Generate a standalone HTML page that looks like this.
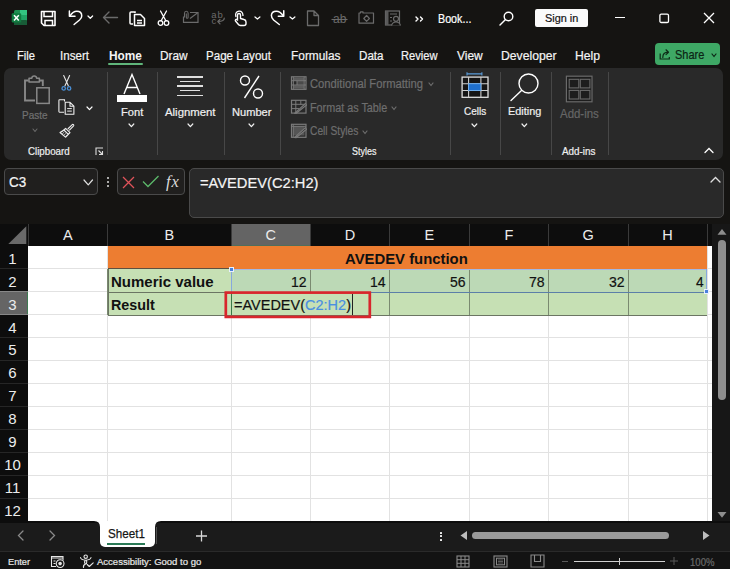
<!DOCTYPE html>
<html><head><meta charset="utf-8">
<style>
*{margin:0;padding:0;box-sizing:border-box}
html,body{width:730px;height:569px;overflow:hidden;background:#151412;font-family:"Liberation Sans",sans-serif}
.a{position:absolute}
.t{position:absolute;white-space:nowrap;font-family:"Liberation Sans",sans-serif}
svg{overflow:visible}
</style></head><body>
<div class="a" style="left:0px;top:0px;width:730px;height:569px;background:#151412;"></div>
<svg class="a" style="left:10px;top:9px;" width="18" height="17" viewBox="0 0 18 17">
<rect x="4" y="1" width="13" height="15" rx="1.5" fill="#1e8f52"/>
<rect x="10" y="1" width="7" height="5" fill="#33c481"/>
<rect x="10" y="6" width="7" height="5" fill="#21a366"/>
<rect x="4" y="11" width="13" height="5" rx="1" fill="#185c37"/>
<rect x="1.7" y="4.2" width="9.5" height="9.3" rx="1.2" fill="#107c41"/>
<path d="M4 6.2 L8.8 11.6 M8.8 6.2 L4 11.6" stroke="#fff" stroke-width="1.5"/>
</svg>
<svg class="a" style="left:40px;top:10px;" width="17" height="17" viewBox="0 0 17 17">
<path d="M1.5 1.5 H15 V15.5 H4 L1.5 13 Z" fill="none" stroke="#fff" stroke-width="1.6" stroke-linejoin="round"/>
<path d="M4 1.5 V6.5 H12.5 V1.5" fill="none" stroke="#fff" stroke-width="1.5"/>
<path d="M5 15.5 V10.5 H12.5 V15.5" fill="none" stroke="#fff" stroke-width="1.5"/>
</svg>
<svg class="a" style="left:64px;top:7px;" width="22" height="20" viewBox="0 0 22 20">
<path d="M5.4 3.9 V9.3 H11" fill="none" stroke="#fff" stroke-width="1.5" stroke-linecap="round" stroke-linejoin="round"/>
<path d="M6 8.8 Q9 4.2 12.8 4.2 Q17.75 4.2 17.75 8.9 Q17.75 11 15.5 13 L10.1 17.5" fill="none" stroke="#fff" stroke-width="1.5" stroke-linecap="round"/>
</svg>
<svg class="a" style="left:87.2px;top:15.4px;" width="6.6" height="4.3" viewBox="0 0 6.6 4.3"><path d="M1 1 L3.3 3.3 L5.6 1" fill="none" stroke="#fff" stroke-width="1.25" stroke-linecap="round" stroke-linejoin="round"/></svg>
<svg class="a" style="left:102px;top:11px;" width="17" height="13" viewBox="0 0 17 13"><path d="M1.5 6.5 H15.5 M7 1 L1.5 6.5 L7 12" fill="none" stroke="#6b6b6b" stroke-width="1.4" stroke-linecap="round" stroke-linejoin="round"/></svg>
<svg class="a" style="left:129px;top:10px;" width="18" height="17" viewBox="0 0 18 17">
<path d="M6 3 V2 H2 Q1 2 1 3 V13 Q1 14 2 14 H4" fill="none" stroke="#fff" stroke-width="1.5"/>
<path d="M5.5 4.5 H11.5 L15.5 8.5 V15.5 H5.5 Z" fill="none" stroke="#fff" stroke-width="1.5" stroke-linejoin="round"/>
<path d="M8 10.5 H13 M8 13 H13" stroke="#fff" stroke-width="1.3"/>
</svg>
<svg class="a" style="left:157px;top:10px;" width="13" height="17" viewBox="0 0 13 17">
<path d="M3.5 1 L9 11 M9.5 1 L4 11" stroke="#fff" stroke-width="1.3" stroke-linecap="round"/>
<circle cx="3.5" cy="13" r="2.3" fill="none" stroke="#fff" stroke-width="1.3"/>
<circle cx="9.5" cy="13" r="2.3" fill="none" stroke="#fff" stroke-width="1.3"/>
</svg>
<svg class="a" style="left:182px;top:10px;" width="18" height="14" viewBox="0 0 18 14">
<path d="M1.5 6.5 V12.3 H16 V2.5 H8" fill="none" stroke="#6b6b6b" stroke-width="1.2"/>
<path d="M16 2.5 L8 8.5" stroke="#6b6b6b" stroke-width="1.2"/>
<path d="M2.5 7.5 V3.3 Q2.5 1.3 4.3 1.3 Q6.1 1.3 6.1 3.3 V7.2 Q6.1 8.3 5.2 8.3 Q4.3 8.3 4.3 7.2 V3.5" fill="none" stroke="#6b6b6b" stroke-width="1.1"/>
</svg>
<div class="t" style="left:211.2px;top:10.00px;font-size:9.5px;line-height:9.5px;color:#6b6b6b;font-weight:normal;">a<span style="margin-left:1px">b</span></div>
<div class="t" style="left:211.6px;top:16.00px;font-size:9.5px;line-height:9.5px;color:#6b6b6b;font-weight:normal;">c</div>
<svg class="a" style="left:216px;top:17px;" width="10" height="8" viewBox="0 0 10 8"><path d="M8.3 1 Q8.3 4.5 2 4.5 M4 2.3 L1.8 4.5 L4 6.8" fill="none" stroke="#6b6b6b" stroke-width="1.2" stroke-linecap="round" stroke-linejoin="round"/></svg>
<svg class="a" style="left:233px;top:10px;" width="15" height="17" viewBox="0 0 15 17">
<path d="M4.5 9 V5 Q4.5 3.5 6 3.5 Q7.5 3.5 7.5 5 V8.5 L11 9.5 Q13 10 13 12 V13.5 Q13 15.5 11 15.5 H7.5 Q6 15.5 5 14 L2.5 11 Q2 10 3 9.5 Q4 9 5 10.5" fill="none" stroke="#fff" stroke-width="1.4" stroke-linejoin="round"/>
<path d="M3 7 Q1.5 2 6 1.2 Q10 1 10 6" fill="none" stroke="#fff" stroke-width="1.3"/>
</svg>
<svg class="a" style="left:253.6px;top:15.6px;" width="6.9" height="4.0" viewBox="0 0 6.9 4.0"><path d="M1 1 L3.45 3.0 L5.9 1" fill="none" stroke="#fff" stroke-width="1.25" stroke-linecap="round" stroke-linejoin="round"/></svg>
<svg class="a" style="left:266px;top:7px;" width="22" height="20" viewBox="0 0 22 20">
<path d="M17.75 3.7 V9.3 H12.3" fill="none" stroke="#fff" stroke-width="1.5" stroke-linecap="round" stroke-linejoin="round"/>
<path d="M17.2 8.8 Q14.2 4.2 10.4 4.2 Q5.4 4.2 5.4 8.6 Q5.4 10.8 7.6 13 L13.3 17.5" fill="none" stroke="#fff" stroke-width="1.5" stroke-linecap="round"/>
</svg>
<svg class="a" style="left:289.4px;top:15.6px;" width="6.9" height="4.0" viewBox="0 0 6.9 4.0"><path d="M1 1 L3.45 3.0 L5.9 1" fill="none" stroke="#fff" stroke-width="1.25" stroke-linecap="round" stroke-linejoin="round"/></svg>
<svg class="a" style="left:306px;top:10px;" width="14" height="17" viewBox="0 0 14 17"><path d="M1.5 1 H8 L12.5 5.5 V15.5 H1.5 Z M8 1 V5.5 H12.5" fill="none" stroke="#6b6b6b" stroke-width="1.3" stroke-linejoin="round"/></svg>
<div class="t" style="left:333px;top:13.00px;font-size:12px;line-height:12px;color:#6b6b6b;font-weight:normal;">ab</div>
<svg class="a" style="left:331px;top:18px;" width="17" height="3" viewBox="0 0 17 3"><path d="M0.5 1.5 H16.5" stroke="#6b6b6b" stroke-width="1.1"/></svg>
<svg class="a" style="left:358px;top:10px;" width="17" height="15" viewBox="0 0 17 15"><path d="M1 3 H2.5 V1.8 H5 V3 H15.5 V13.2 H1 Z" fill="none" stroke="#6b6b6b" stroke-width="1.2" stroke-linejoin="round"/>
<path d="M8.6 5.4 L11.4 8.5 L8.6 11.4 L5.8 8.5 Z" fill="none" stroke="#6b6b6b" stroke-width="1.2" stroke-linejoin="round"/></svg>
<svg class="a" style="left:384px;top:10px;" width="18" height="17" viewBox="0 0 18 17"><rect x="1.5" y="1" width="14" height="14" fill="none" stroke="#6b6b6b" stroke-width="1.2"/>
<rect x="1.5" y="1" width="3" height="14" fill="#5a5a5a"/>
<path d="M6 4 H13 M6 7.5 H8 M6 11 H8" stroke="#6b6b6b" stroke-width="1.2"/>
<circle cx="12" cy="8.8" r="2.5" fill="#151412" stroke="#6b6b6b" stroke-width="1.2"/>
<path d="M7.5 15.5 Q8.5 12 12 12 Q15.5 12 16.5 15.5" fill="#151412" stroke="#6b6b6b" stroke-width="1.2"/></svg>
<svg class="a" style="left:415px;top:16px;" width="10" height="6" viewBox="0 0 10 6"><path d="M1 1 L3 3 L1 5 M5.5 1 L7.5 3 L5.5 5" fill="none" stroke="#fff" stroke-width="1.4" stroke-linecap="round" stroke-linejoin="round"/></svg>
<div class="t" style="left:438.40px;top:13.00px;font-size:12.3px;line-height:12.3px;color:#ffffff;font-weight:normal;transform:scaleX(0.8717);transform-origin:0 0;-webkit-text-stroke:0.2px currentColor;">Book...</div>
<svg class="a" style="left:498px;top:11px;" width="17" height="16" viewBox="0 0 17 16"><circle cx="10.5" cy="5.5" r="4.3" fill="none" stroke="#fff" stroke-width="1.4"/>
<path d="M7.5 8.5 L2 14" stroke="#fff" stroke-width="1.5" stroke-linecap="round"/></svg>
<div class="a" style="left:535px;top:9px;width:53px;height:18px;background:#fafafa;border-radius:2px"></div>
<div class="t" style="left:544.70px;top:13.00px;font-size:11.8px;line-height:11.8px;color:#111;font-weight:normal;transform:scaleX(0.9222);transform-origin:0 0;-webkit-text-stroke:0.2px currentColor;">Sign in</div>
<div class="a" style="left:615px;top:17px;width:10px;height:1.2px;background:#fff;"></div>
<svg class="a" style="left:658px;top:12px;" width="12" height="12" viewBox="0 0 12 12"><rect x="1.9" y="2.1" width="8.6" height="8.4" rx="1.3" fill="none" stroke="#fff" stroke-width="1.3"/></svg>
<svg class="a" style="left:703px;top:12px;" width="12" height="12" viewBox="0 0 12 12"><path d="M1 1 L11 11 M11 1 L1 11" stroke="#fff" stroke-width="1.3"/></svg>
<div class="t" style="left:17.00px;top:50.00px;font-size:12.3px;line-height:12.3px;color:#f4f4f4;font-weight:normal;transform:scaleX(0.9090);transform-origin:0 0;-webkit-text-stroke:0.2px currentColor;">File</div>
<div class="t" style="left:60.00px;top:50.00px;font-size:12.3px;line-height:12.3px;color:#f4f4f4;font-weight:normal;transform:scaleX(0.9431);transform-origin:0 0;-webkit-text-stroke:0.2px currentColor;">Insert</div>
<div class="t" style="left:109.00px;top:50.00px;font-size:12.3px;line-height:12.3px;color:#f4f4f4;font-weight:bold;transform:scaleX(0.9651);transform-origin:0 0;">Home</div>
<div class="t" style="left:160.00px;top:50.00px;font-size:12.3px;line-height:12.3px;color:#f4f4f4;font-weight:normal;transform:scaleX(0.9645);transform-origin:0 0;-webkit-text-stroke:0.2px currentColor;">Draw</div>
<div class="t" style="left:206.20px;top:50.00px;font-size:12.3px;line-height:12.3px;color:#f4f4f4;font-weight:normal;transform:scaleX(0.9411);transform-origin:0 0;-webkit-text-stroke:0.2px currentColor;">Page Layout</div>
<div class="t" style="left:290.80px;top:50.00px;font-size:12.3px;line-height:12.3px;color:#f4f4f4;font-weight:normal;transform:scaleX(0.9670);transform-origin:0 0;-webkit-text-stroke:0.2px currentColor;">Formulas</div>
<div class="t" style="left:358.60px;top:50.00px;font-size:12.3px;line-height:12.3px;color:#f4f4f4;font-weight:normal;transform:scaleX(0.9456);transform-origin:0 0;-webkit-text-stroke:0.2px currentColor;">Data</div>
<div class="t" style="left:401.40px;top:50.00px;font-size:12.3px;line-height:12.3px;color:#f4f4f4;font-weight:normal;transform:scaleX(0.9072);transform-origin:0 0;-webkit-text-stroke:0.2px currentColor;">Review</div>
<div class="t" style="left:456.70px;top:50.00px;font-size:12.3px;line-height:12.3px;color:#f4f4f4;font-weight:normal;transform:scaleX(0.9756);transform-origin:0 0;-webkit-text-stroke:0.2px currentColor;">View</div>
<div class="t" style="left:500.80px;top:50.00px;font-size:12.3px;line-height:12.3px;color:#f4f4f4;font-weight:normal;transform:scaleX(0.9913);transform-origin:0 0;-webkit-text-stroke:0.2px currentColor;">Developer</div>
<div class="t" style="left:575.00px;top:50.00px;font-size:12.3px;line-height:12.3px;color:#f4f4f4;font-weight:normal;transform:scaleX(0.9891);transform-origin:0 0;-webkit-text-stroke:0.2px currentColor;">Help</div>
<div class="a" style="left:108px;top:63px;width:35px;height:2px;background:#5fb57a;border-radius:1px"></div>
<div class="a" style="left:655px;top:43px;width:65px;height:22px;background:#3ea865;border-radius:4px"></div>
<svg class="a" style="left:659px;top:48px;" width="12" height="12" viewBox="0 0 12 12"><path d="M1.2 5.5 V11 H10.3 V9" fill="none" stroke="#0d2b17" stroke-width="1.2"/>
<path d="M3.8 9.5 Q3.8 4.2 9 4.2 M7 1.8 L9.5 4.2 L7 6.6" fill="none" stroke="#0d2b17" stroke-width="1.2" stroke-linejoin="round" stroke-linecap="round"/></svg>
<div class="t" style="left:675.20px;top:49.00px;font-size:12.4px;line-height:12.4px;color:#0b2414;font-weight:normal;transform:scaleX(0.8850);transform-origin:0 0;-webkit-text-stroke:0.2px currentColor;">Share</div>
<svg class="a" style="left:710.5px;top:53px;" width="6" height="4.5" viewBox="0 0 6 4.5"><path d="M1 1 L3.0 3.5 L5 1" fill="none" stroke="#0b2414" stroke-width="1.2" stroke-linecap="round" stroke-linejoin="round"/></svg>
<div class="a" style="left:4px;top:68px;width:719px;height:92px;background:#292929;border-radius:7px"></div>
<div class="a" style="left:107px;top:72px;width:1px;height:83px;background:#474747;"></div>
<div class="a" style="left:157px;top:72px;width:1px;height:83px;background:#474747;"></div>
<div class="a" style="left:224px;top:72px;width:1px;height:83px;background:#474747;"></div>
<div class="a" style="left:280px;top:72px;width:1px;height:83px;background:#474747;"></div>
<div class="a" style="left:450px;top:72px;width:1px;height:83px;background:#474747;"></div>
<div class="a" style="left:500px;top:72px;width:1px;height:83px;background:#474747;"></div>
<div class="a" style="left:550.5px;top:72px;width:1px;height:83px;background:#474747;"></div>
<div class="a" style="left:608px;top:72px;width:1px;height:83px;background:#474747;"></div>
<svg class="a" style="left:22px;top:75px;" width="30" height="31" viewBox="0 0 30 31">
<path d="M6.5 5.5 H3 V25.5 H13" fill="none" stroke="#888" stroke-width="1.9"/>
<path d="M17.8 5.5 H20.8 V11" fill="none" stroke="#888" stroke-width="1.9"/>
<path d="M7 3.2 H9.8 Q10 1.1 12.2 1.1 Q14.4 1.1 14.6 3.2 H17.4 V7 H7 Z" fill="none" stroke="#888" stroke-width="1.5" stroke-linejoin="round"/>
<rect x="14.8" y="12.8" width="12.4" height="15.6" fill="#292929" stroke="#888" stroke-width="1.5"/>
</svg>
<div class="t" style="left:21.60px;top:110.00px;font-size:10.5px;line-height:10.5px;color:#717171;font-weight:normal;transform:scaleX(0.9468);transform-origin:0 0;-webkit-text-stroke:0.2px currentColor;">Paste</div>
<svg class="a" style="left:31.5px;top:127.5px;" width="6" height="4.5" viewBox="0 0 6 4.5"><path d="M1 1 L3.0 3.5 L5 1" fill="none" stroke="#6a6a6a" stroke-width="1.1" stroke-linecap="round" stroke-linejoin="round"/></svg>
<svg class="a" style="left:60px;top:74px;" width="13" height="17" viewBox="0 0 13 17">
<path d="M3.7 1.5 L8.3 11.8 M9.6 1.5 L5 11.8" stroke="#e6e6e6" stroke-width="1.1" stroke-linecap="round"/>
<circle cx="3.7" cy="14.4" r="1.7" fill="none" stroke="#4a8fd6" stroke-width="1.3"/>
<circle cx="9.1" cy="14.4" r="1.7" fill="none" stroke="#4a8fd6" stroke-width="1.3"/>
</svg>
<svg class="a" style="left:58px;top:99px;" width="17" height="16" viewBox="0 0 17 16">
<path d="M6.5 2.5 V0.8 H1.5 Q0.9 0.8 0.9 1.4 V12.6 Q0.9 13.2 1.5 13.2 H6" fill="none" stroke="#eee" stroke-width="1.1"/>
<path d="M7.2 3.3 H12 L15.9 7.2 V15.2 H7.2 Z M12 3.3 V7.2 H15.9" fill="none" stroke="#eee" stroke-width="1.1" stroke-linejoin="round"/>
<path d="M9.2 9.6 H13.8 M9.2 12.1 H13.8" stroke="#eee" stroke-width="1"/>
</svg>
<svg class="a" style="left:85.5px;top:105.5px;" width="7" height="4.6" viewBox="0 0 7 4.6"><path d="M1 1 L3.5 3.6 L6 1" fill="none" stroke="#fff" stroke-width="1.2" stroke-linecap="round" stroke-linejoin="round"/></svg>
<svg class="a" style="left:59px;top:123px;" width="16" height="15" viewBox="0 0 16 15">
<path d="M8.8 6 L13 1.8 Q13.8 1 14.5 1.7 Q15.2 2.4 14.4 3.2 L10.2 7.4" fill="none" stroke="#eee" stroke-width="1.1"/>
<path d="M6.6 5.3 L11 9.7 L9.3 11.4 L4.9 7 Z" fill="none" stroke="#eee" stroke-width="1.1" stroke-linejoin="round"/>
<path d="M4.9 7 Q3 8.5 1 9.5 L6.5 14.2 Q8 13 9.3 11.4" fill="none" stroke="#eee" stroke-width="1.1" stroke-linejoin="round"/>
<path d="M3.2 10.8 L5.2 9.2 M4.8 12.3 L6.8 10.5 M6.5 13.4 L8.2 11.8" stroke="#ccc" stroke-width="0.9"/>
</svg>
<div class="t" style="left:28.30px;top:146.00px;font-size:10.5px;line-height:10.5px;color:#f0f0f0;font-weight:normal;transform:scaleX(0.9279);transform-origin:0 0;-webkit-text-stroke:0.2px currentColor;">Clipboard</div>
<svg class="a" style="left:95px;top:147px;" width="9" height="9" viewBox="0 0 9 9"><path d="M1 8 V1 H8" fill="none" stroke="#ddd" stroke-width="1.1"/><path d="M3.5 3.5 L7.5 7.5 M7.5 4 V7.5 H4" fill="none" stroke="#ddd" stroke-width="1.1"/></svg>
<svg class="a" style="left:116px;top:73px;" width="32" height="30" viewBox="0 0 32 30"><path d="M8 21 L16 1.5 L24 21 M11 14.5 H21" fill="none" stroke="#fff" stroke-width="1.4"/></svg>
<div class="a" style="left:117px;top:95px;width:30px;height:7px;background:#ffffff;"></div>
<div class="t" style="left:121.00px;top:107.00px;font-size:11px;line-height:11px;color:#f0f0f0;font-weight:normal;transform:scaleX(1.0091);transform-origin:0 0;-webkit-text-stroke:0.2px currentColor;">Font</div>
<svg class="a" style="left:128.3px;top:123.3px;" width="6.8" height="4.7" viewBox="0 0 6.8 4.7"><path d="M1 1 L3.4 3.7 L5.8 1" fill="none" stroke="#f0f0f0" stroke-width="1.2" stroke-linecap="round" stroke-linejoin="round"/></svg>
<div class="a" style="left:177px;top:76.3px;width:26px;height:1.5px;background:#e0e0e0;"></div>
<div class="a" style="left:180px;top:80.8px;width:20px;height:1.5px;background:#e0e0e0;"></div>
<div class="a" style="left:177px;top:85.3px;width:26px;height:1.5px;background:#e0e0e0;"></div>
<div class="a" style="left:180px;top:89.8px;width:20px;height:1.5px;background:#e0e0e0;"></div>
<div class="a" style="left:177px;top:94.8px;width:26px;height:1.5px;background:#e0e0e0;"></div>
<div class="t" style="left:164.70px;top:107.00px;font-size:11px;line-height:11px;color:#f0f0f0;font-weight:normal;transform:scaleX(1.0328);transform-origin:0 0;-webkit-text-stroke:0.2px currentColor;">Alignment</div>
<svg class="a" style="left:186.5px;top:123.3px;" width="6.8" height="4.7" viewBox="0 0 6.8 4.7"><path d="M1 1 L3.4 3.7 L5.8 1" fill="none" stroke="#f0f0f0" stroke-width="1.2" stroke-linecap="round" stroke-linejoin="round"/></svg>
<svg class="a" style="left:239px;top:74px;" width="26" height="26" viewBox="0 0 26 26"><circle cx="6" cy="6.5" r="4.5" fill="none" stroke="#fff" stroke-width="1.4"/>
<circle cx="19" cy="19.5" r="4.5" fill="none" stroke="#fff" stroke-width="1.4"/>
<path d="M20 2 L5.5 24" stroke="#fff" stroke-width="1.4"/></svg>
<div class="t" style="left:232.00px;top:107.00px;font-size:11px;line-height:11px;color:#f0f0f0;font-weight:normal;transform:scaleX(1.0075);transform-origin:0 0;-webkit-text-stroke:0.2px currentColor;">Number</div>
<svg class="a" style="left:247.9px;top:123.3px;" width="6.8" height="4.7" viewBox="0 0 6.8 4.7"><path d="M1 1 L3.4 3.7 L5.8 1" fill="none" stroke="#f0f0f0" stroke-width="1.2" stroke-linecap="round" stroke-linejoin="round"/></svg>
<svg class="a" style="left:290px;top:76px;" width="17" height="15" viewBox="0 0 17 15"><rect x="1.5" y="0.8" width="14.5" height="12.5" fill="none" stroke="#7a7a7a" stroke-width="1.2"/>
<rect x="3.5" y="1.4" width="10.5" height="3" fill="#5c5c5c"/><rect x="7" y="5" width="7" height="3.8" fill="#4a4a4a"/><rect x="3.5" y="9.3" width="10.5" height="3.4" fill="#5c5c5c"/>
<path d="M1.5 4.7 H16 M1.5 9 H16 M3.3 0.8 V13.3 M14.2 0.8 V13.3 M7 4.7 V9" stroke="#7a7a7a" stroke-width="1"/></svg>
<svg class="a" style="left:290px;top:99px;" width="17" height="16" viewBox="0 0 17 16"><rect x="1.5" y="1.3" width="14.5" height="12.8" fill="none" stroke="#7a7a7a" stroke-width="1.2"/>
<path d="M1.5 5.3 H16 M1.5 9.6 H9 M5.8 1.3 V14 M10.8 1.3 V6" stroke="#7a7a7a" stroke-width="1"/>
<path d="M4.5 14.3 L15.5 4.5 L16.5 6 L6 14.5 Z" fill="#292929" stroke="#7a7a7a" stroke-width="1.1" stroke-linejoin="round"/></svg>
<svg class="a" style="left:290px;top:123px;" width="17" height="16" viewBox="0 0 17 16"><rect x="1.5" y="1.3" width="14.5" height="13" fill="none" stroke="#7a7a7a" stroke-width="1.2"/>
<rect x="3" y="3" width="11.5" height="9.5" fill="#555"/>
<path d="M1.5 3.3 H16 M3.2 1.3 V14.3" stroke="#7a7a7a" stroke-width="1"/>
<path d="M4.5 14.5 L15.5 4.7 L16.5 6.2 L6 14.7 Z" fill="#292929" stroke="#7a7a7a" stroke-width="1.1" stroke-linejoin="round"/></svg>
<div class="t" style="left:310.00px;top:78.00px;font-size:12.3px;line-height:12.3px;color:#6e6e6e;font-weight:normal;transform:scaleX(0.9132);transform-origin:0 0;-webkit-text-stroke:0.2px currentColor;">Conditional Formatting</div>
<svg class="a" style="left:427.5px;top:82px;" width="6" height="4.5" viewBox="0 0 6 4.5"><path d="M1 1 L3.0 3.5 L5 1" fill="none" stroke="#6e6e6e" stroke-width="1.2" stroke-linecap="round" stroke-linejoin="round"/></svg>
<div class="t" style="left:310.00px;top:102.00px;font-size:12.3px;line-height:12.3px;color:#6e6e6e;font-weight:normal;transform:scaleX(0.8778);transform-origin:0 0;-webkit-text-stroke:0.2px currentColor;">Format as Table</div>
<svg class="a" style="left:390.5px;top:106px;" width="6" height="4.5" viewBox="0 0 6 4.5"><path d="M1 1 L3.0 3.5 L5 1" fill="none" stroke="#6e6e6e" stroke-width="1.2" stroke-linecap="round" stroke-linejoin="round"/></svg>
<div class="t" style="left:310.00px;top:125.00px;font-size:12.3px;line-height:12.3px;color:#6e6e6e;font-weight:normal;transform:scaleX(0.8328);transform-origin:0 0;-webkit-text-stroke:0.2px currentColor;">Cell Styles</div>
<svg class="a" style="left:362px;top:130px;" width="6" height="4.5" viewBox="0 0 6 4.5"><path d="M1 1 L3.0 3.5 L5 1" fill="none" stroke="#6e6e6e" stroke-width="1.2" stroke-linecap="round" stroke-linejoin="round"/></svg>
<div class="t" style="left:352.20px;top:146.00px;font-size:10.5px;line-height:10.5px;color:#f0f0f0;font-weight:normal;transform:scaleX(0.8528);transform-origin:0 0;-webkit-text-stroke:0.2px currentColor;">Styles</div>
<svg class="a" style="left:460px;top:71px;" width="30" height="28" viewBox="0 0 30 28">
<path d="M7 2.9 H21.9 M7 1.3 V4.5 M21.9 1.3 V4.5" stroke="#5a9bd8" stroke-width="1.1"/>
<rect x="2.1" y="6.1" width="25.9" height="20.2" fill="#151515" stroke="#e0e0e0" stroke-width="1.3"/>
<path d="M2.1 12.7 H28 M2.1 19.5 H28 M8.6 6.1 V26.3 M20.9 6.1 V26.3" stroke="#cfcfcf" stroke-width="1.1"/>
<rect x="8.6" y="12.7" width="12.3" height="6.8" fill="#1f6fcc" stroke="#6fb0f0" stroke-width="0.9"/>
</svg>
<div class="t" style="left:463.50px;top:106.00px;font-size:11px;line-height:11px;color:#f0f0f0;font-weight:normal;transform:scaleX(0.9070);transform-origin:0 0;-webkit-text-stroke:0.2px currentColor;">Cells</div>
<svg class="a" style="left:470.9px;top:123.3px;" width="6.8" height="4.7" viewBox="0 0 6.8 4.7"><path d="M1 1 L3.4 3.7 L5.8 1" fill="none" stroke="#f0f0f0" stroke-width="1.2" stroke-linecap="round" stroke-linejoin="round"/></svg>
<svg class="a" style="left:509px;top:72px;" width="32" height="31" viewBox="0 0 32 31"><circle cx="19.5" cy="11.5" r="9.5" fill="none" stroke="#fff" stroke-width="1.4"/>
<path d="M12.5 18.5 L2 28.5" stroke="#fff" stroke-width="1.4" stroke-linecap="round"/></svg>
<div class="t" style="left:507.90px;top:106.00px;font-size:11px;line-height:11px;color:#f0f0f0;font-weight:normal;transform:scaleX(0.9893);transform-origin:0 0;-webkit-text-stroke:0.2px currentColor;">Editing</div>
<svg class="a" style="left:521.1px;top:123.3px;" width="6.7" height="4.7" viewBox="0 0 6.7 4.7"><path d="M1 1 L3.35 3.7 L5.7 1" fill="none" stroke="#f0f0f0" stroke-width="1.2" stroke-linecap="round" stroke-linejoin="round"/></svg>
<svg class="a" style="left:564px;top:75px;" width="30" height="28" viewBox="0 0 30 28"><rect x="2.4" y="1.2" width="25.6" height="25.6" fill="#1d1d1d" stroke="#6a6a6a" stroke-width="1.2"/>
<rect x="5.2" y="4.3" width="9.6" height="8.6" fill="none" stroke="#6a6a6a" stroke-width="1.1"/>
<rect x="16.3" y="4.3" width="9.6" height="8.6" fill="none" stroke="#6a6a6a" stroke-width="1.1"/>
<rect x="5.2" y="15.4" width="9.6" height="8.6" fill="none" stroke="#6a6a6a" stroke-width="1.1"/>
<rect x="16.3" y="15.4" width="9.6" height="8.6" fill="none" stroke="#6a6a6a" stroke-width="1.1"/></svg>
<div class="t" style="left:559.60px;top:108.00px;font-size:12px;line-height:12px;color:#666;font-weight:normal;transform:scaleX(0.9538);transform-origin:0 0;-webkit-text-stroke:0.2px currentColor;">Add-ins</div>
<div class="t" style="left:562.00px;top:146.00px;font-size:10.5px;line-height:10.5px;color:#f0f0f0;font-weight:normal;transform:scaleX(0.9383);transform-origin:0 0;-webkit-text-stroke:0.2px currentColor;">Add-ins</div>
<svg class="a" style="left:703.5px;top:147px;" width="10" height="7" viewBox="0 0 10 7"><path d="M1 5.5 L5 1.5 L9 5.5" fill="none" stroke="#fff" stroke-width="1.3" stroke-linecap="round"/></svg>
<div class="a" style="left:4px;top:168px;width:94px;height:27px;background:#201f1e;border:1px solid #4a4a4a;border-radius:4px"></div>
<div class="t" style="left:8.80px;top:175.00px;font-size:14.3px;line-height:14.3px;color:#f4f4f4;font-weight:normal;transform:scaleX(0.9397);transform-origin:0 0;-webkit-text-stroke:0.2px currentColor;">C3</div>
<svg class="a" style="left:83.2px;top:179.3px;" width="10.5" height="6.8" viewBox="0 0 10.5 6.8"><path d="M1 1 L5.25 5.8 L9.5 1" fill="none" stroke="#e0e0e0" stroke-width="1.2" stroke-linecap="round" stroke-linejoin="round"/></svg>
<div class="a" style="left:106.5px;top:176.6px;width:2px;height:2px;background:#dcdcdc;border-radius:1px"></div>
<div class="a" style="left:106.5px;top:180.6px;width:2px;height:2px;background:#dcdcdc;border-radius:1px"></div>
<div class="a" style="left:106.5px;top:184.6px;width:2px;height:2px;background:#dcdcdc;border-radius:1px"></div>
<div class="a" style="left:117px;top:168px;width:68px;height:27px;background:#201f1e;border:1px solid #4a4a4a;border-radius:4px"></div>
<svg class="a" style="left:122px;top:175.5px;" width="13" height="13" viewBox="0 0 13 13"><path d="M1 1 L12 12 M12 1 L1 12" stroke="#e0535a" stroke-width="1.25"/></svg>
<svg class="a" style="left:142px;top:175px;" width="18" height="13" viewBox="0 0 18 13"><path d="M1 6.5 L6 11.5 L16.5 1" fill="none" stroke="#5cb86a" stroke-width="1.25"/></svg>
<div class="t" style="left:166px;top:174.00px;font-size:16.5px;line-height:16.5px;color:#dcdcdc;font-weight:normal;font-family:'Liberation Serif',serif;"><i>f</i><i style="margin-left:1px">x</i></div>
<div class="a" style="left:189px;top:168px;width:535px;height:50px;background:#292929;border:1px solid #4a4a4a;border-radius:5px"></div>
<div class="t" style="left:200.00px;top:176.00px;font-size:14.8px;line-height:14.8px;color:#f4f4f4;font-weight:normal;transform:scaleX(0.9922);transform-origin:0 0;-webkit-text-stroke:0.2px currentColor;">=AVEDEV(C2:H2)</div>
<svg class="a" style="left:709.5px;top:176px;" width="11" height="7" viewBox="0 0 11 7"><path d="M1 6 L5.5 1.5 L10 6" fill="none" stroke="#e0e0e0" stroke-width="1.3" stroke-linecap="round"/></svg>
<div class="a" style="left:28px;top:246px;width:684px;height:275px;background:#ffffff;"></div>
<div class="a" style="left:0px;top:224px;width:712px;height:22px;background:#0d0d0d;"></div>
<div class="a" style="left:231px;top:224px;width:79.7px;height:22px;background:#646464;"></div>
<div class="a" style="left:231px;top:244.8px;width:79.7px;height:1.2px;background:#4f6e5c;"></div>
<svg class="a" style="left:6px;top:225px;" width="22" height="20" viewBox="0 0 22 20"><path d="M20.3 1.3 V19 H2.3 Z" fill="#6a6a6a"/></svg>
<div class="a" style="left:27.5px;top:224px;width:1px;height:22px;background:#3a3a3a;"></div>
<div class="a" style="left:107.1px;top:224px;width:1px;height:22px;background:#3a3a3a;"></div>
<div class="a" style="left:230.5px;top:224px;width:1px;height:22px;background:#3a3a3a;"></div>
<div class="a" style="left:310.2px;top:224px;width:1px;height:22px;background:#3a3a3a;"></div>
<div class="a" style="left:389.0px;top:224px;width:1px;height:22px;background:#3a3a3a;"></div>
<div class="a" style="left:468.7px;top:224px;width:1px;height:22px;background:#3a3a3a;"></div>
<div class="a" style="left:548.0px;top:224px;width:1px;height:22px;background:#3a3a3a;"></div>
<div class="a" style="left:627.5px;top:224px;width:1px;height:22px;background:#3a3a3a;"></div>
<div class="a" style="left:706.5px;top:224px;width:1px;height:22px;background:#3a3a3a;"></div>
<div class="t" style="left:67.8px;transform:translateX(-50%);top:228.00px;font-size:14.5px;line-height:14.5px;color:#ececec;font-weight:normal;">A</div>
<div class="t" style="left:169.3px;transform:translateX(-50%);top:228.00px;font-size:14.5px;line-height:14.5px;color:#ececec;font-weight:normal;">B</div>
<div class="t" style="left:270.85px;transform:translateX(-50%);top:228.00px;font-size:14.5px;line-height:14.5px;color:#ececec;font-weight:normal;">C</div>
<div class="t" style="left:350.1px;transform:translateX(-50%);top:228.00px;font-size:14.5px;line-height:14.5px;color:#ececec;font-weight:normal;">D</div>
<div class="t" style="left:429.35px;transform:translateX(-50%);top:228.00px;font-size:14.5px;line-height:14.5px;color:#ececec;font-weight:normal;">E</div>
<div class="t" style="left:508.85px;transform:translateX(-50%);top:228.00px;font-size:14.5px;line-height:14.5px;color:#ececec;font-weight:normal;">F</div>
<div class="t" style="left:588.25px;transform:translateX(-50%);top:228.00px;font-size:14.5px;line-height:14.5px;color:#ececec;font-weight:normal;">G</div>
<div class="t" style="left:667.5px;transform:translateX(-50%);top:228.00px;font-size:14.5px;line-height:14.5px;color:#ececec;font-weight:normal;">H</div>
<div class="a" style="left:0px;top:246px;width:28px;height:275px;background:#0d0d0d;"></div>
<div class="a" style="left:0px;top:291.84000000000003px;width:28px;height:22.92px;background:#656565;"></div>
<div class="a" style="left:27px;top:291.84000000000003px;width:1px;height:22.92px;background:#3f7a52;"></div>
<div class="t" style="left:12.5px;transform:translateX(-50%);top:251.00px;font-size:15px;line-height:15px;color:#ececec;font-weight:normal;">1</div>
<div class="a" style="left:0px;top:268.42px;width:28px;height:1px;background:#262626;"></div>
<div class="t" style="left:12.5px;transform:translateX(-50%);top:274.00px;font-size:15px;line-height:15px;color:#ececec;font-weight:normal;">2</div>
<div class="a" style="left:0px;top:291.34000000000003px;width:28px;height:1px;background:#888;"></div>
<div class="t" style="left:12.5px;transform:translateX(-50%);top:297.00px;font-size:15px;line-height:15px;color:#ececec;font-weight:normal;">3</div>
<div class="a" style="left:0px;top:314.26px;width:28px;height:1px;background:#888;"></div>
<div class="t" style="left:12.5px;transform:translateX(-50%);top:320.00px;font-size:15px;line-height:15px;color:#ececec;font-weight:normal;">4</div>
<div class="a" style="left:0px;top:337.18px;width:28px;height:1px;background:#262626;"></div>
<div class="t" style="left:12.5px;transform:translateX(-50%);top:342.00px;font-size:15px;line-height:15px;color:#ececec;font-weight:normal;">5</div>
<div class="a" style="left:0px;top:360.1px;width:28px;height:1px;background:#262626;"></div>
<div class="t" style="left:12.5px;transform:translateX(-50%);top:365.00px;font-size:15px;line-height:15px;color:#ececec;font-weight:normal;">6</div>
<div class="a" style="left:0px;top:383.02px;width:28px;height:1px;background:#262626;"></div>
<div class="t" style="left:12.5px;transform:translateX(-50%);top:388.00px;font-size:15px;line-height:15px;color:#ececec;font-weight:normal;">7</div>
<div class="a" style="left:0px;top:405.94px;width:28px;height:1px;background:#262626;"></div>
<div class="t" style="left:12.5px;transform:translateX(-50%);top:411.00px;font-size:15px;line-height:15px;color:#ececec;font-weight:normal;">8</div>
<div class="a" style="left:0px;top:428.86px;width:28px;height:1px;background:#262626;"></div>
<div class="t" style="left:12.5px;transform:translateX(-50%);top:434.00px;font-size:15px;line-height:15px;color:#ececec;font-weight:normal;">9</div>
<div class="a" style="left:0px;top:451.78000000000003px;width:28px;height:1px;background:#262626;"></div>
<div class="t" style="left:12.5px;transform:translateX(-50%);top:457.00px;font-size:15px;line-height:15px;color:#ececec;font-weight:normal;">10</div>
<div class="a" style="left:0px;top:474.70000000000005px;width:28px;height:1px;background:#262626;"></div>
<div class="t" style="left:12.5px;transform:translateX(-50%);top:480.00px;font-size:15px;line-height:15px;color:#ececec;font-weight:normal;">11</div>
<div class="a" style="left:0px;top:497.62px;width:28px;height:1px;background:#262626;"></div>
<div class="t" style="left:12.5px;transform:translateX(-50%);top:503.00px;font-size:15px;line-height:15px;color:#ececec;font-weight:normal;">12</div>
<div class="a" style="left:0px;top:520.54px;width:28px;height:1px;background:#262626;"></div>
<div class="a" style="left:107.1px;top:246px;width:1px;height:275px;background:#e2e2e2;"></div>
<div class="a" style="left:230.5px;top:246px;width:1px;height:275px;background:#e2e2e2;"></div>
<div class="a" style="left:310.2px;top:246px;width:1px;height:275px;background:#e2e2e2;"></div>
<div class="a" style="left:389.0px;top:246px;width:1px;height:275px;background:#e2e2e2;"></div>
<div class="a" style="left:468.7px;top:246px;width:1px;height:275px;background:#e2e2e2;"></div>
<div class="a" style="left:548.0px;top:246px;width:1px;height:275px;background:#e2e2e2;"></div>
<div class="a" style="left:627.5px;top:246px;width:1px;height:275px;background:#e2e2e2;"></div>
<div class="a" style="left:706.5px;top:246px;width:1px;height:275px;background:#e2e2e2;"></div>
<div class="a" style="left:28px;top:268.42px;width:684px;height:1px;background:#e2e2e2;"></div>
<div class="a" style="left:28px;top:291.34000000000003px;width:684px;height:1px;background:#e2e2e2;"></div>
<div class="a" style="left:28px;top:314.26px;width:684px;height:1px;background:#e2e2e2;"></div>
<div class="a" style="left:28px;top:337.18px;width:684px;height:1px;background:#e2e2e2;"></div>
<div class="a" style="left:28px;top:360.1px;width:684px;height:1px;background:#e2e2e2;"></div>
<div class="a" style="left:28px;top:383.02px;width:684px;height:1px;background:#e2e2e2;"></div>
<div class="a" style="left:28px;top:405.94px;width:684px;height:1px;background:#e2e2e2;"></div>
<div class="a" style="left:28px;top:428.86px;width:684px;height:1px;background:#e2e2e2;"></div>
<div class="a" style="left:28px;top:451.78000000000003px;width:684px;height:1px;background:#e2e2e2;"></div>
<div class="a" style="left:28px;top:474.70000000000005px;width:684px;height:1px;background:#e2e2e2;"></div>
<div class="a" style="left:28px;top:497.62px;width:684px;height:1px;background:#e2e2e2;"></div>
<div class="a" style="left:28px;top:520.54px;width:684px;height:1px;background:#e2e2e2;"></div>
<div class="a" style="left:108px;top:246px;width:599px;height:23px;background:#ed7d31;"></div>
<div class="t" style="left:345.40px;top:252.00px;font-size:14.6px;line-height:14.6px;color:#111;font-weight:bold;transform:scaleX(1.0183);transform-origin:0 0;">AVEDEV function</div>
<div class="a" style="left:108px;top:269px;width:599px;height:46px;background:#c6e0b4;"></div>
<div class="a" style="left:231px;top:269.5px;width:476px;height:23px;background:#bcd9b6;"></div>
<div class="a" style="left:107.1px;top:269px;width:1px;height:46px;background:#7a8a70;"></div>
<div class="a" style="left:230.5px;top:269px;width:1px;height:46px;background:#7a8a70;"></div>
<div class="a" style="left:310.2px;top:269px;width:1px;height:46px;background:#7a8a70;"></div>
<div class="a" style="left:389.0px;top:269px;width:1px;height:46px;background:#7a8a70;"></div>
<div class="a" style="left:468.7px;top:269px;width:1px;height:46px;background:#7a8a70;"></div>
<div class="a" style="left:548.0px;top:269px;width:1px;height:46px;background:#7a8a70;"></div>
<div class="a" style="left:627.5px;top:269px;width:1px;height:46px;background:#7a8a70;"></div>
<div class="a" style="left:108px;top:292px;width:599px;height:1px;background:#6b7563;"></div>
<div class="a" style="left:107.5px;top:314.5px;width:599.5px;height:1.2px;background:#6b7563;"></div>
<div class="a" style="left:107.5px;top:269px;width:1px;height:46px;background:#6b7563;"></div>
<div class="a" style="left:108px;top:268.3px;width:123px;height:1.2px;background:#5e5040;"></div>
<div class="a" style="left:231px;top:268.5px;width:476px;height:1.5px;background:#a4b8e4;"></div>
<div class="a" style="left:231px;top:291.6px;width:476px;height:1.3px;background:#5c7fa8;"></div>
<div class="a" style="left:230.6px;top:269px;width:1.2px;height:23.5px;background:#86a8de;"></div>
<div class="a" style="left:706px;top:269px;width:1.2px;height:23.5px;background:#86a8de;"></div>
<div class="a" style="left:229.8px;top:267.8px;width:3.2px;height:3.2px;background:#4a80dc;outline:0.6px solid #e8f0ff"></div>
<div class="a" style="left:705.2px;top:290.2px;width:3.2px;height:3.2px;background:#4a80dc;outline:0.6px solid #e8f0ff"></div>
<div class="t" style="left:110.70px;top:275.00px;font-size:14.6px;line-height:14.6px;color:#111;font-weight:bold;transform:scaleX(1.0281);transform-origin:0 0;">Numeric value</div>
<div class="t" style="left:110.70px;top:298.00px;font-size:14.6px;line-height:14.6px;color:#111;font-weight:bold;transform:scaleX(0.9820);transform-origin:0 0;">Result</div>
<div class="t" style="left:291.30px;top:274.00px;font-size:15px;line-height:15px;color:#111;font-weight:normal;transform:scaleX(0.9369);transform-origin:0 0;-webkit-text-stroke:0.2px currentColor;">12</div>
<div class="t" style="left:370.10px;top:274.00px;font-size:15px;line-height:15px;color:#111;font-weight:normal;transform:scaleX(0.9369);transform-origin:0 0;-webkit-text-stroke:0.2px currentColor;">14</div>
<div class="t" style="left:449.80px;top:274.00px;font-size:15px;line-height:15px;color:#111;font-weight:normal;transform:scaleX(0.9369);transform-origin:0 0;-webkit-text-stroke:0.2px currentColor;">56</div>
<div class="t" style="left:529.10px;top:274.00px;font-size:15px;line-height:15px;color:#111;font-weight:normal;transform:scaleX(0.9369);transform-origin:0 0;-webkit-text-stroke:0.2px currentColor;">78</div>
<div class="t" style="left:608.60px;top:274.00px;font-size:15px;line-height:15px;color:#111;font-weight:normal;transform:scaleX(0.9369);transform-origin:0 0;-webkit-text-stroke:0.2px currentColor;">32</div>
<div class="t" style="left:695.60px;top:274.00px;font-size:15px;line-height:15px;color:#111;font-weight:normal;transform:scaleX(0.9129);transform-origin:0 0;-webkit-text-stroke:0.2px currentColor;">4</div>
<div class="a" style="left:231px;top:293px;width:79.7px;height:22px;background:#c6e0b4;"></div>
<div class="a" style="left:231px;top:293px;width:1px;height:22px;background:#3b7a48;"></div>
<svg class="a" style="left:224px;top:291px;" width="148" height="28" viewBox="0 0 148 28"><rect x="1.8" y="1.6" width="144" height="24.3" fill="none" stroke="#d8262c" stroke-width="2.7"/></svg>
<div class="t" style="left:234.40px;top:298.00px;font-size:14.8px;line-height:14.8px;color:#111;font-weight:normal;transform:scaleX(0.9796);transform-origin:0 0;-webkit-text-stroke:0.2px currentColor;">=AVEDEV(<span style="color:#4a8fe0">C2:H2</span>)</div>
<div class="a" style="left:352px;top:294.2px;width:1.1px;height:20.4px;background:#222;"></div>
<div class="a" style="left:712px;top:224px;width:18px;height:297px;background:#171717;"></div>
<svg class="a" style="left:716px;top:228px;" width="12" height="8" viewBox="0 0 12 8"><path d="M1.5 6.8 L6 1 L10.5 6.8 Z" fill="#8e8e8e"/></svg>
<div class="a" style="left:718px;top:240px;width:8px;height:160px;background:#8e8e8e;border-radius:4px"></div>
<div class="a" style="left:0px;top:521px;width:730px;height:30px;background:#1b1b1b;"></div>
<div class="a" style="left:0px;top:521px;width:730px;height:1.5px;background:#0d0d0d;"></div>
<div class="a" style="left:0px;top:551px;width:730px;height:18px;background:#131313;"></div>
<div class="a" style="left:0px;top:550.5px;width:730px;height:1.2px;background:#2a2a2a;"></div>
<svg class="a" style="left:17px;top:530px;" width="8" height="11" viewBox="0 0 8 11"><path d="M6 1 L1.5 5.5 L6 10" fill="none" stroke="#8a8a8a" stroke-width="1.3" stroke-linecap="round"/></svg>
<svg class="a" style="left:48px;top:530px;" width="8" height="11" viewBox="0 0 8 11"><path d="M2 1 L6.5 5.5 L2 10" fill="none" stroke="#8a8a8a" stroke-width="1.3" stroke-linecap="round"/></svg>
<div class="a" style="left:99.5px;top:521px;width:55px;height:26px;background:#ffffff;border-radius:0 0 5px 5px"></div>
<svg class="a" style="left:94px;top:521px;" width="6" height="6" viewBox="0 0 6 6"><path d="M0 0 H6 V6 Q6 0 0 0 Z" fill="#fff"/></svg>
<svg class="a" style="left:154.5px;top:521px;" width="6" height="6" viewBox="0 0 6 6"><path d="M6 0 H0 V6 Q0 0 6 0 Z" fill="#fff"/></svg>
<div class="t" style="left:107.50px;top:527.00px;font-size:13.5px;line-height:13.5px;color:#151515;font-weight:normal;transform:scaleX(0.8623);transform-origin:0 0;-webkit-text-stroke:0.2px currentColor;-webkit-text-stroke:0.25px #151515">Sheet1</div>
<div class="a" style="left:107px;top:542.5px;width:38px;height:2px;background:#2a7a56;"></div>
<div class="a" style="left:156px;top:527px;width:1px;height:16.5px;background:#505050;"></div>
<svg class="a" style="left:195px;top:530px;" width="13" height="12" viewBox="0 0 13 12"><path d="M6.5 0.5 V11.5 M1 6 H12" stroke="#d8d8d8" stroke-width="1.3"/></svg>
<div class="a" style="left:439.6px;top:531.6px;width:2px;height:2px;background:#f0f0f0;border-radius:0.5px"></div>
<div class="a" style="left:439.6px;top:535.3px;width:2px;height:2px;background:#f0f0f0;border-radius:0.5px"></div>
<div class="a" style="left:439.6px;top:539px;width:2px;height:2px;background:#f0f0f0;border-radius:0.5px"></div>
<svg class="a" style="left:459px;top:530px;" width="9" height="11" viewBox="0 0 9 11"><path d="M8 1 V10 L1.5 5.5 Z" fill="#bdbdbd"/></svg>
<div class="a" style="left:472px;top:532px;width:197px;height:7px;background:#9a9a9a;border-radius:3.5px"></div>
<svg class="a" style="left:702px;top:530px;" width="9" height="11" viewBox="0 0 9 11"><path d="M1 1 V10 L7.5 5.5 Z" fill="#bdbdbd"/></svg>
<svg class="a" style="left:716px;top:511px;" width="12" height="8" viewBox="0 0 12 8"><path d="M1.5 1 L6 6.8 L10.5 1 Z" fill="#8e8e8e"/></svg>
<div class="t" style="left:7.50px;top:557.00px;font-size:9.6px;line-height:9.6px;color:#e8e8e8;font-weight:normal;transform:scaleX(0.9589);transform-origin:0 0;-webkit-text-stroke:0.2px currentColor;">Enter</div>
<svg class="a" style="left:50px;top:555px;" width="16" height="13" viewBox="0 0 16 13"><path d="M6 11.5 H1.5 V1.5 H13 V5.5" fill="none" stroke="#e6e6e6" stroke-width="1.1"/>
<path d="M1.5 3 H13 M3.5 6 H5.5 M3.5 8.5 H5.5" stroke="#e6e6e6" stroke-width="1"/>
<circle cx="10.1" cy="8.6" r="3.9" fill="#141414" stroke="#e6e6e6" stroke-width="1.1"/><circle cx="10.1" cy="8.6" r="1.8" fill="#e6e6e6"/></svg>
<svg class="a" style="left:79px;top:554px;" width="16" height="15" viewBox="0 0 16 15"><circle cx="6.7" cy="2.7" r="1.7" fill="none" stroke="#e6e6e6" stroke-width="1.1"/>
<path d="M1.5 3.5 Q2 6 6.7 6.2 Q11.5 6 12 3.5" fill="none" stroke="#e6e6e6" stroke-width="1.1" stroke-linecap="round"/>
<path d="M6 6.5 Q5 9 6.5 10 Q4 11 4.5 13.5 M7.5 6.5 Q8 8 7.5 9.5" fill="none" stroke="#e6e6e6" stroke-width="1.1" stroke-linecap="round"/>
<path d="M8.2 10.5 L10.3 12.5 L14.2 8.8" fill="none" stroke="#e6e6e6" stroke-width="1.1" stroke-linecap="round" stroke-linejoin="round"/></svg>
<div class="t" style="left:97.00px;top:557.00px;font-size:9.6px;line-height:9.6px;color:#e8e8e8;font-weight:normal;transform:scaleX(0.9922);transform-origin:0 0;-webkit-text-stroke:0.2px currentColor;">Accessibility: Good to go</div>
<svg class="a" style="left:456px;top:555px;" width="14" height="13" viewBox="0 0 14 13"><rect x="1" y="1" width="12" height="11" fill="none" stroke="#8a8a8a" stroke-width="1.1"/><path d="M1 4.7 H13 M1 8.3 H13 M5 1 V12 M9 1 V12" stroke="#8a8a8a" stroke-width="1"/></svg>
<svg class="a" style="left:493px;top:555px;" width="15" height="13" viewBox="0 0 15 13"><rect x="1" y="1" width="13" height="11" fill="none" stroke="#8a8a8a" stroke-width="1.1"/><rect x="3.5" y="3.2" width="8" height="6.6" fill="none" stroke="#8a8a8a" stroke-width="1"/><path d="M5 5 H10 M5 6.5 H10 M5 8 H10" stroke="#8a8a8a" stroke-width="0.6"/></svg>
<svg class="a" style="left:530px;top:554px;" width="15" height="14" viewBox="0 0 15 14"><path d="M1 1 H14 V13 H1 Z M4.5 1 V7.5 H10.5 V1" fill="none" stroke="#8a8a8a" stroke-width="1.1"/></svg>
<div class="a" style="left:562px;top:561px;width:6px;height:1px;background:#5a5a5a;"></div>
<div class="a" style="left:574px;top:561px;width:91px;height:1px;background:#d0d0d0;"></div>
<div class="a" style="left:619px;top:558px;width:1.2px;height:7px;background:#d0d0d0;"></div>
<svg class="a" style="left:669px;top:556px;" width="10" height="10" viewBox="0 0 10 10"><path d="M5 1 V9 M1 5 H9" stroke="#5a5a5a" stroke-width="1"/></svg>
<div class="t" style="left:689.50px;top:557.00px;font-size:10.5px;line-height:10.5px;color:#6a6a6a;font-weight:normal;transform:scaleX(0.9115);transform-origin:0 0;-webkit-text-stroke:0.2px currentColor;">100%</div>
</body></html>
